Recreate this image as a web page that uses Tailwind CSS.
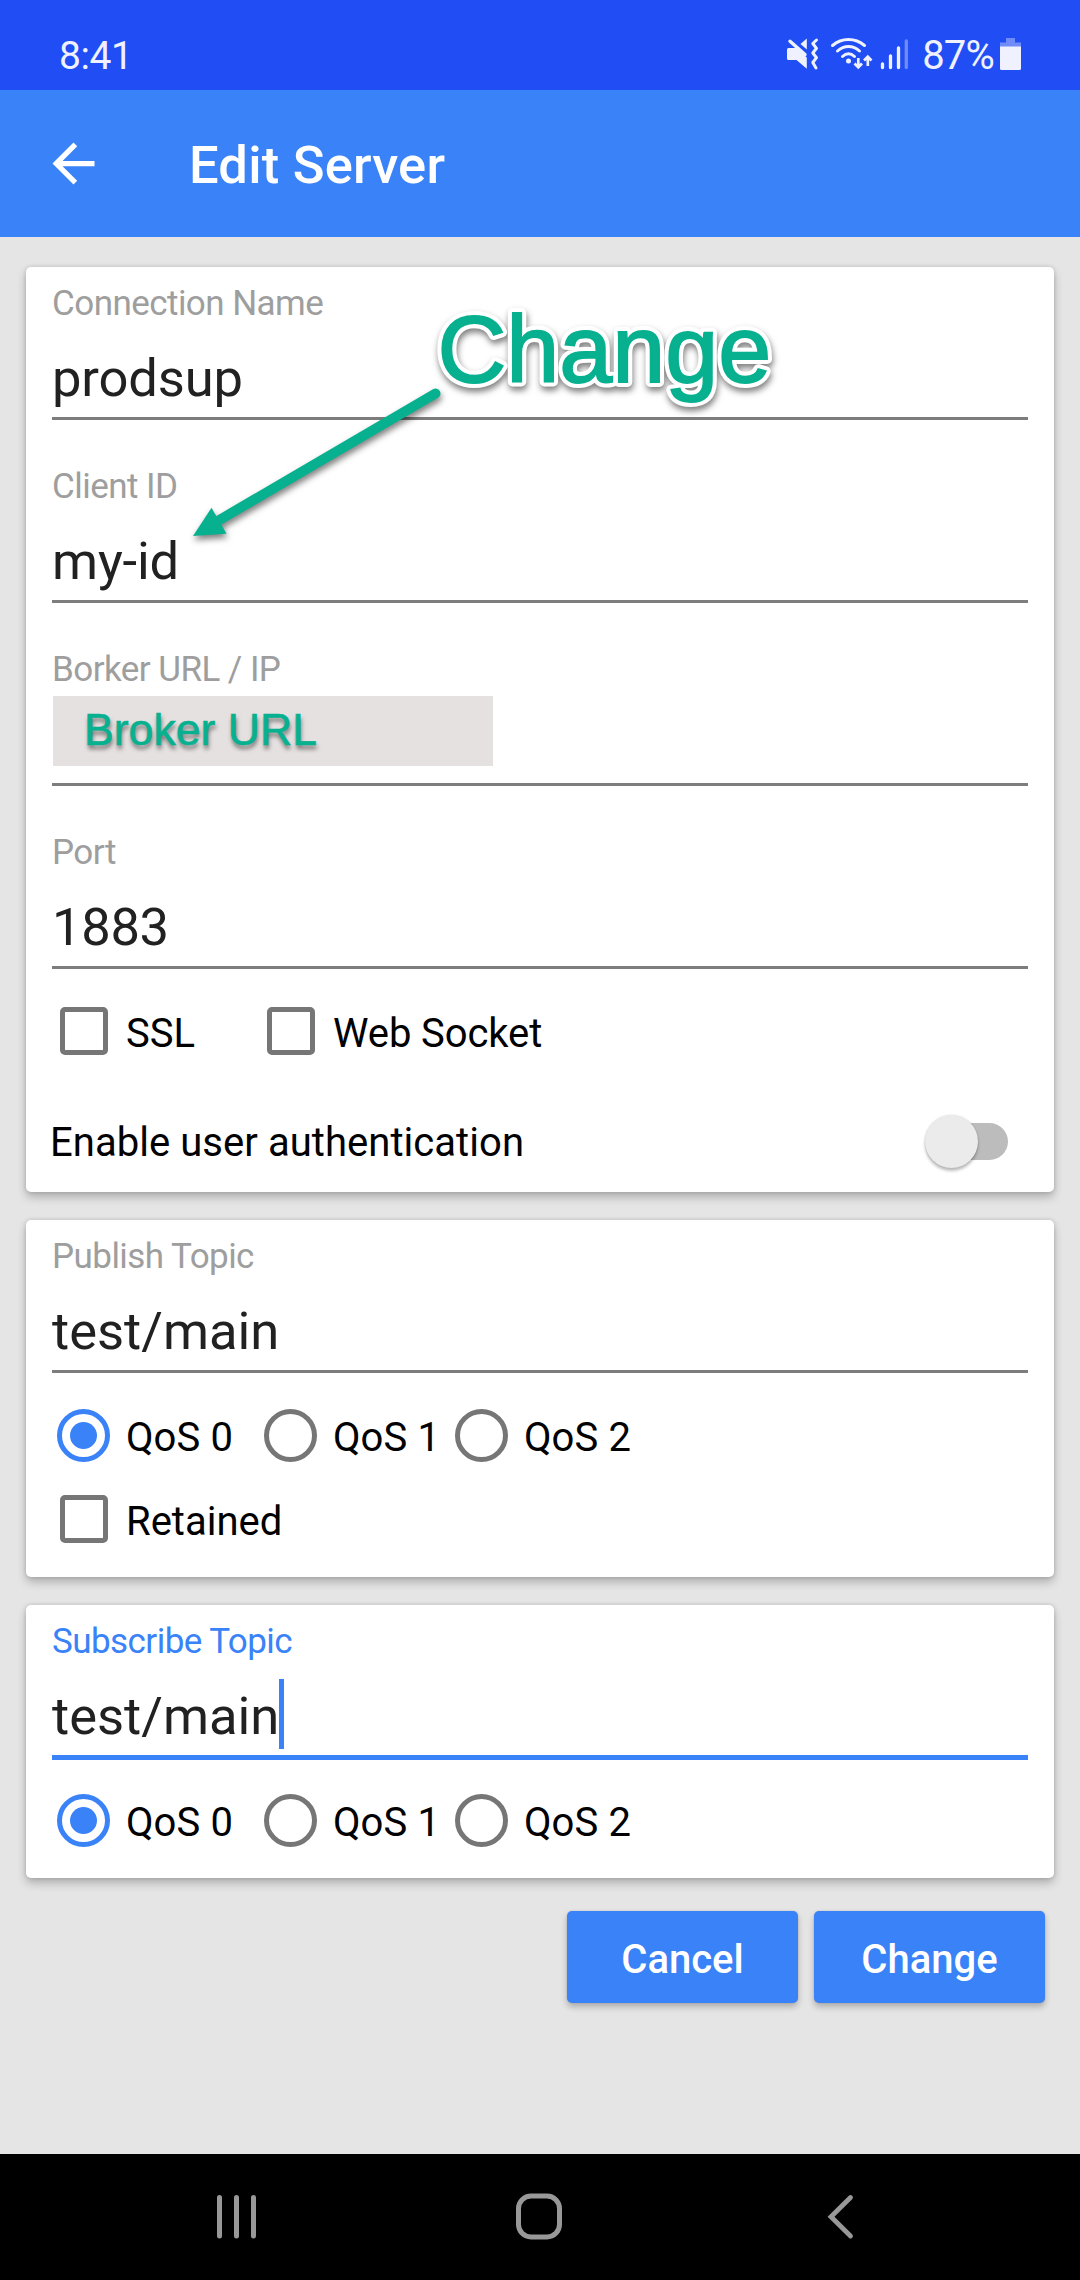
<!DOCTYPE html>
<html lang="en">
<head>
<meta charset="utf-8">
<title>Edit Server</title>
<script src="https://cdn.jsdelivr.net/npm/@tailwindcss/browser@4"></script>
</head>
<body class="relative flex h-[2280px] w-[1080px] flex-col overflow-hidden bg-[#e5e5e5] font-['Roboto',sans-serif] text-[40px] leading-[48px] text-black">

<header class="flex h-[90px] shrink-0 items-center justify-between bg-[#214df5] pr-[58px] pl-[59px] text-[#eff2fe]">
  <div class="pt-[21px] text-[39px] leading-[48px] tracking-[-0.400px]">8:41</div>
  <div class="flex items-center">
    <svg class="mt-[20px] h-[36px] w-[130px]" viewBox="0 0 130 36" fill="none">
      <path d="M3.500 11H11L21.800 20.500V31.800L11.500 23H3.500Q2 23 2 21.500V12.500Q2 11 3.500 11Z" fill="#eff2fe"/>
      <path d="M5 4.200L20 17.500" stroke="#eff2fe" stroke-width="3.400" stroke-linecap="round"/>
      <path d="M21.800 1.500V12.500L15.500 7Z" fill="#eff2fe"/>
      <path d="M31.500 3L27.800 6.500L31.500 11.300L27.800 16L31.500 20.700L27.800 25.500L31 31" stroke="#eff2fe" stroke-width="3" stroke-linecap="round" stroke-linejoin="round"/>
      <g stroke="#eff2fe" stroke-width="3" stroke-linecap="round">
        <path d="M47.500 8.500Q54.500 2.500 63.500 2.500T79.500 8.500"/>
        <path d="M52.500 14Q57.500 9.500 63.500 9.500T74.500 14"/>
        <path d="M57.500 19.500Q60.500 16.700 63.500 16.700T69.500 19.500"/>
      </g>
      <circle cx="63.500" cy="24" r="2.500" fill="#eff2fe"/>
      <path d="M73.300 21V30M69.500 26.500L73.300 30.300L77 26.500M82.800 29V20M79 23.500L82.800 19.700L86.500 23.500" stroke="#eff2fe" stroke-width="2.700"/>
      <path d="M97.500 27V30.500M105.500 19V30.500M113.500 11V30.500" stroke="#eff2fe" stroke-width="3.300" stroke-linecap="round"/>
      <path d="M121.300 4V30.500" stroke="#6f8cf9" stroke-width="3.300" stroke-linecap="round"/>
    </svg>
    <div class="mr-[6px] pt-[21px] pl-[7px] text-[40px] leading-[48px] tracking-[-0.800px]">87%</div>
    <svg class="mt-[17px] h-[36px] w-[22px]" viewBox="0 0 22 36">
      <path d="M6 2H15V6.500H21V11H0V6.500H6Z" fill="#6f8cf9"/>
      <path d="M0 10.500H21V32.500Q21 34 19.500 34H1.500Q0 34 0 32.500Z" fill="#eff2fe"/>
    </svg>
  </div>
</header>

<div class="flex h-[147px] shrink-0 items-center bg-[#3a82f7] text-white">
  <svg class="ml-[42px] h-[63px] w-[63px]" viewBox="0 0 24 24" fill="#fff"><path d="M20 11H7.830l5.590-5.590L12 4l-8 8 8 8 1.410-1.410L7.830 13H20v-2z"/></svg>
  <h1 class="ml-[84px] pt-[3px] text-[52.500px] leading-[60px] font-medium tracking-[0.200px]">Edit Server</h1>
</div>

<main class="flex flex-1 flex-col px-[26px] pt-[30px]">
  <section class="h-[925px] rounded-[5px] bg-white px-[26px] shadow-[0_5px_10px_rgba(0,0,0,0.24),0_0_4px_rgba(0,0,0,0.14)]">
    <div class="flex flex-col gap-[30px]">
      <div class="h-[153px] border-b-3 border-[#7d7d7d] pt-[17px]">
        <div class="text-[35px] leading-[40px] tracking-[-0.550px] text-[#9e9e9e]">Connection Name</div>
        <div class="mt-[24px] text-[52.500px] leading-[60px] tracking-[-0.150px] text-[#212121]">prodsup</div>
      </div>
      <div class="h-[153px] border-b-3 border-[#7d7d7d] pt-[17px]">
        <div class="text-[35px] leading-[40px] tracking-[-0.550px] text-[#9e9e9e]">Client ID</div>
        <div class="mt-[24px] text-[52.500px] leading-[60px] tracking-[-0.150px] text-[#212121]">my-id</div>
      </div>
      <div class="h-[153px] border-b-3 border-[#7d7d7d] pt-[17px]">
        <div class="text-[35px] leading-[40px] tracking-[-0.550px] text-[#9e9e9e]">Borker URL / IP</div>
        <div class="mt-[6px] ml-px flex h-[70px] w-[440px] items-center bg-[#e6e1e1] pb-[2px] pl-[31px] font-['Liberation_Sans',sans-serif] text-[44.600px] text-[#07b08f] [-webkit-text-stroke:0.600px_#07b08f] [text-shadow:1px_4px_4px_rgba(0,0,0,0.5)]">Broker URL</div>
      </div>
      <div class="h-[153px] border-b-3 border-[#7d7d7d] pt-[17px]">
        <div class="text-[35px] leading-[40px] tracking-[-0.550px] text-[#9e9e9e]">Port</div>
        <div class="mt-[24px] text-[52.500px] leading-[60px] tracking-[-0.300px] text-[#212121]">1883</div>
      </div>
    </div>
    <div class="flex h-[124px] items-center pl-[8px]">
      <div class="flex w-[207px] items-center gap-[18px]">
        <span class="size-[48px] rounded-[5px] border-[5.500px] border-[#767676]"></span>
        <span class="pt-[6px]">SSL</span>
      </div>
      <div class="flex items-center gap-[18px]">
        <span class="size-[48px] rounded-[5px] border-[5.500px] border-[#767676]"></span>
        <span class="pt-[6px] tracking-[-0.100px]">Web Socket</span>
      </div>
    </div>
    <div class="flex h-[99px] items-center justify-between pr-[20px]">
      <span class="-ml-[2px] tracking-[0.050px]">Enable user authentication</span>
      <span class="mb-[3px] flex h-[37px] w-[78px] items-center rounded-full bg-[#bcbcbc]">
        <span class="-ml-[5px] size-[53px] shrink-0 rounded-full bg-[#ebebeb] shadow-[0_3px_3px_rgba(0,0,0,0.25),0_0_2px_rgba(0,0,0,0.15)]"></span>
      </span>
    </div>
  </section>

  <section class="mt-[28px] h-[357px] rounded-[5px] bg-white px-[26px] shadow-[0_5px_10px_rgba(0,0,0,0.24),0_0_4px_rgba(0,0,0,0.14)]">
    <div class="h-[153px] border-b-3 border-[#7d7d7d] pt-[17px]">
      <div class="text-[35px] leading-[40px] tracking-[-0.550px] text-[#9e9e9e]">Publish Topic</div>
      <div class="mt-[24px] text-[52.500px] leading-[60px] text-[#212121]">test/main</div>
    </div>
    <div class="mt-[20px] flex h-[84px] items-center pl-[5px]">
      <div class="flex w-[207px] items-center gap-[16px]">
        <span class="flex size-[53px] items-center justify-center rounded-full border-[5.500px] border-[#3a82f7]"><span class="size-[27px] rounded-full bg-[#3a82f7]"></span></span>
        <span class="pt-[6px] tracking-[0.100px]">QoS 0</span>
      </div>
      <div class="flex w-[191px] items-center gap-[16px]">
        <span class="size-[53px] rounded-full border-[5.500px] border-[#767676]"></span>
        <span class="pt-[6px] tracking-[0.100px]">QoS 1</span>
      </div>
      <div class="flex items-center gap-[16px]">
        <span class="size-[53px] rounded-full border-[5.500px] border-[#767676]"></span>
        <span class="pt-[6px] tracking-[0.100px]">QoS 2</span>
      </div>
    </div>
    <div class="flex h-[84px] items-center gap-[18px] pl-[8px]">
      <span class="size-[48px] rounded-[5px] border-[5.500px] border-[#767676]"></span>
      <span class="pt-[6px]">Retained</span>
    </div>
  </section>

  <section class="mt-[28px] h-[273px] rounded-[5px] bg-white px-[26px] shadow-[0_5px_10px_rgba(0,0,0,0.24),0_0_4px_rgba(0,0,0,0.14)]">
    <div class="h-[155px] border-b-5 border-[#3a82f7] pt-[17px]">
      <div class="text-[35px] leading-[40px] tracking-[-0.550px] text-[#3a82f7]">Subscribe Topic</div>
      <div class="mt-[17px] flex h-[70px] items-center">
        <span class="pt-[4px] text-[52.500px] leading-[60px] text-[#212121]">test/main</span>
        <span class="h-[70px] w-[5px] bg-[#3a82f7]"></span>
      </div>
    </div>
    <div class="mt-[18px] flex h-[84px] items-center pl-[5px]">
      <div class="flex w-[207px] items-center gap-[16px]">
        <span class="flex size-[53px] items-center justify-center rounded-full border-[5.500px] border-[#3a82f7]"><span class="size-[27px] rounded-full bg-[#3a82f7]"></span></span>
        <span class="pt-[6px] tracking-[0.100px]">QoS 0</span>
      </div>
      <div class="flex w-[191px] items-center gap-[16px]">
        <span class="size-[53px] rounded-full border-[5.500px] border-[#767676]"></span>
        <span class="pt-[6px] tracking-[0.100px]">QoS 1</span>
      </div>
      <div class="flex items-center gap-[16px]">
        <span class="size-[53px] rounded-full border-[5.500px] border-[#767676]"></span>
        <span class="pt-[6px] tracking-[0.100px]">QoS 2</span>
      </div>
    </div>
  </section>

  <div class="mt-[33px] flex justify-end gap-[16px] pr-[9px] font-medium text-white">
    <button class="h-[92px] w-[231px] rounded-[5px] bg-[#3a82f7] pt-[5px] shadow-[0_4px_6px_rgba(0,0,0,0.24),0_0_2px_rgba(0,0,0,0.14)]">Cancel</button>
    <button class="h-[92px] w-[231px] rounded-[5px] bg-[#3a82f7] pt-[5px] shadow-[0_4px_6px_rgba(0,0,0,0.24),0_0_2px_rgba(0,0,0,0.14)]">Change</button>
  </div>
</main>

<nav class="flex h-[126px] shrink-0 items-start justify-between bg-black pt-[38px] pr-[224px] pl-[214px]">
  <svg class="h-[48px] w-[46px]" viewBox="0 0 46 48" stroke="#989898" stroke-width="5" stroke-linecap="round"><path d="M5.500 5.500V44M22.500 5.500V44M39.500 5.500V44"/></svg>
  <svg class="mr-[8px] h-[48px] w-[48px]" viewBox="0 0 48 48" fill="none" stroke="#989898" stroke-width="5"><rect x="3.500" y="4" width="41" height="41" rx="12.500"/></svg>
  <svg class="h-[48px] w-[30px]" viewBox="0 0 30 48" fill="none" stroke="#989898" stroke-width="4.800" stroke-linecap="round"><path d="M24.500 5.500L5 24.700L24.500 44"/></svg>
</nav>

<!-- Callout drawn over the form -->
<svg class="absolute top-[267px] left-[180px] h-[300px] w-[620px] overflow-visible" viewBox="180 267 620 300">
  <g class="drop-shadow-[1px_4px_3px_rgba(0,0,0,0.5)]">
    <path d="M435.500 393.500L216 522" stroke="#07b08f" stroke-width="10" stroke-linecap="round"/>
    <path d="M193 536L211.500 507.700L226.500 533.700Z" fill="#07b08f"/>
  </g>
  <text x="437.500" y="382" class="fill-white stroke-white font-['Liberation_Sans',sans-serif] text-[95.300px] drop-shadow-[1px_4px_3px_rgba(0,0,0,0.5)]" stroke-width="10" stroke-linejoin="round">Change</text>
  <text x="437.500" y="382" class="fill-[#07b08f] stroke-[#07b08f] font-['Liberation_Sans',sans-serif] text-[95.300px]" stroke-width="1.800">Change</text>
</svg>
</body>
</html>
